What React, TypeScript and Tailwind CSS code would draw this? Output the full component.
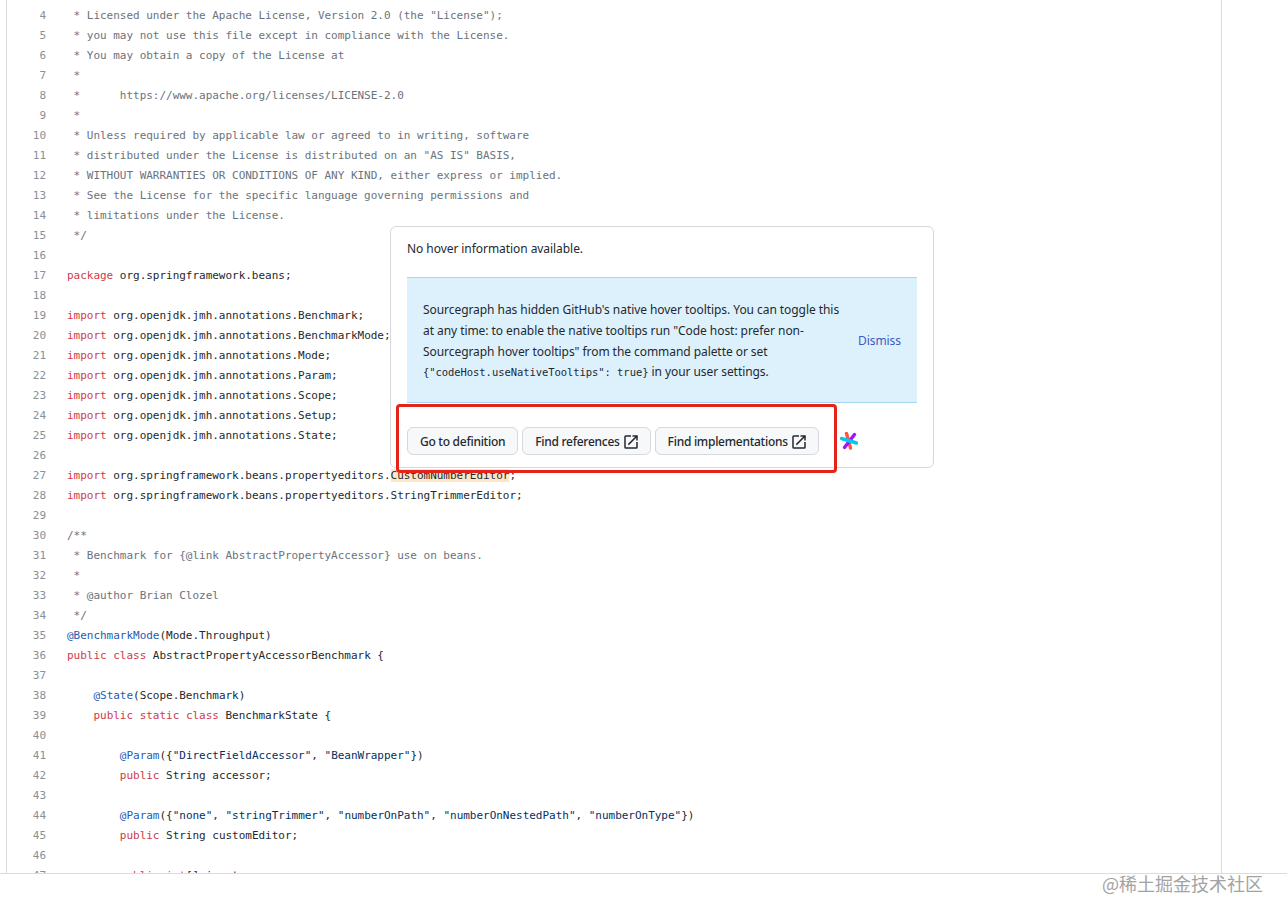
import React from "react";

type Tok = [string, string?];

const C = "text-[#6a737d]";
const K = "text-[#cf3a4b]";
const A = "text-[#1f5cb0]";
const S = "text-[#032f62]";

const lines: Tok[][] = [
  [[' * Licensed under the Apache License, Version 2.0 (the "License");', C]],
  [[" * you may not use this file except in compliance with the License.", C]],
  [[" * You may obtain a copy of the License at", C]],
  [[" *", C]],
  [[" *      https://www.apache.org/licenses/LICENSE-2.0", C]],
  [[" *", C]],
  [[" * Unless required by applicable law or agreed to in writing, software", C]],
  [[" * distributed under the License is distributed on an \"AS IS\" BASIS,", C]],
  [[" * WITHOUT WARRANTIES OR CONDITIONS OF ANY KIND, either express or implied.", C]],
  [[" * See the License for the specific language governing permissions and", C]],
  [[" * limitations under the License.", C]],
  [[" */", C]],
  [],
  [["package", K], [" org.springframework.beans;"]],
  [],
  [["import", K], [" org.openjdk.jmh.annotations.Benchmark;"]],
  [["import", K], [" org.openjdk.jmh.annotations.BenchmarkMode;"]],
  [["import", K], [" org.openjdk.jmh.annotations.Mode;"]],
  [["import", K], [" org.openjdk.jmh.annotations.Param;"]],
  [["import", K], [" org.openjdk.jmh.annotations.Scope;"]],
  [["import", K], [" org.openjdk.jmh.annotations.Setup;"]],
  [["import", K], [" org.openjdk.jmh.annotations.State;"]],
  [],
  [["import", K], [" org.springframework.beans.propertyeditors."], ["CustomNumberEditor", "bg-[#fde6c8]"], [";"]],
  [["import", K], [" org.springframework.beans.propertyeditors.StringTrimmerEditor;"]],
  [],
  [["/**", C]],
  [[" * Benchmark for {@link AbstractPropertyAccessor} use on beans.", C]],
  [[" *", C]],
  [[" * @author Brian Clozel", C]],
  [[" */", C]],
  [["@BenchmarkMode", A], ["(Mode.Throughput)"]],
  [["public", K], [" "], ["class", K], [" AbstractPropertyAccessorBenchmark {"]],
  [],
  [["    "], ["@State", A], ["(Scope.Benchmark)"]],
  [["    "], ["public", K], [" "], ["static", K], [" "], ["class", K], [" BenchmarkState {"]],
  [],
  [["        "], ["@Param", A], ["({"], ['"DirectFieldAccessor"', S], [", "], ['"BeanWrapper"', S], ["})"]],
  [["        "], ["public", K], [" String accessor;"]],
  [],
  [["        "], ["@Param", A], ["({"], ['"none"', S], [", "], ['"stringTrimmer"', S], [", "], ['"numberOnPath"', S], [", "], ['"numberOnNestedPath"', S], [", "], ['"numberOnType"', S], ["})"]],
  [["        "], ["public", K], [" String customEditor;"]],
  [],
  [["        "], ["public", K], [" "], ["int", K], ["[] input;"]],
];

function OpenIcon() {
  return (
    <svg viewBox="0 0 24 24" className="ml-[2px] h-[18px] w-[18px] fill-[#24292e]">
      <path d="M14 3v2h3.59l-9.83 9.83 1.41 1.41L19 6.41V10h2V3M19 19H5V5h7V3H5a2 2 0 0 0-2 2v14a2 2 0 0 0 2 2h14a2 2 0 0 0 2-2v-7h-2v7Z" />
    </svg>
  );
}

function HoverButton({ label, external }: { label: string; external?: boolean }) {
  return (
    <button
      className={
        external
          ? "flex h-7 items-center rounded-md border border-[#d5d9dd] bg-[#f6f8fa] pb-px pl-3 pr-[10px] pt-[2px] text-[12px] font-medium tracking-[-0.27px] text-[#24292e]"
          : "flex h-7 items-center rounded-md border border-[#d5d9dd] bg-[#f6f8fa] pb-px pl-3 pr-3 pt-[2px] text-[12px] font-medium tracking-[-0.27px] text-[#24292e]"
      }
    >
      {label}
      {external && <OpenIcon />}
    </button>
  );
}

function SourcegraphLogo() {
  return (
    <svg viewBox="0 0 18 18" className="ml-[17px] h-[18px] w-[18px]" fill="none" strokeWidth="3.4" strokeLinecap="round">
      <path d="M6.5 1.5 10.5 16" stroke="#ff5543" />
      <path d="M14.5 2.5 4.5 15.5" stroke="#a112ff" />
      <path d="M1.5 6.5 16.5 11" stroke="#00cbec" />
    </svg>
  );
}

export default function App() {
  return (
    <div className="relative h-[919px] w-full overflow-hidden bg-white font-['Liberation_Sans',sans-serif]">
      <div className="h-[874px] overflow-hidden border-b border-[#dcdcdc]">
        <div className="ml-[6px] h-full w-[1216px] border-x border-[#dcdcdc] pt-[6px] font-['DejaVu_Sans_Mono',monospace] text-[11px] leading-5 tracking-[-0.02px] text-[#24292e]">
          {lines.map((toks, i) => (
            <div key={i} className="flex h-5">
              <span className="w-[39px] shrink-0 text-right text-[#8a8f94]">{i + 4}</span>
              <span className="ml-[21px] whitespace-pre">
                {toks.map(([text, cls], j) => (
                  <span key={j} className={cls}>
                    {text}
                  </span>
                ))}
              </span>
            </div>
          ))}
        </div>
      </div>

      <div className="absolute left-[1102px] top-[871px] font-['Noto_Sans_CJK_SC',sans-serif] text-[18px] leading-[24px] text-[#a3a3a3]">
        @稀土掘金技术社区
      </div>

      <div className="absolute left-[390px] top-[226px] h-[242px] w-[544px] rounded-md border border-[#d5d9dd] bg-white px-4 font-['Noto_Sans',sans-serif] text-[12px] tracking-[-0.06px] text-[#24292e]">
        <div className="flex h-[50px] items-start pt-[11px] leading-[21px]">No hover information available.</div>
        <div className="flex h-[126px] items-center border-y border-[#a8d6f0] bg-[#ddf1fd] px-4 pt-[3px] leading-[20.7px]">
          <div className="flex-1">
            Sourcegraph has hidden GitHub's native hover tooltips. You can toggle this
            <br />
            at any time: to enable the native tooltips run "Code host: prefer non-
            <br />
            Sourcegraph hover tooltips" from the command palette or set
            <br />
            <code className="font-['DejaVu_Sans_Mono',monospace] text-[10.5px]">{'{"codeHost.useNativeTooltips": true}'}</code> in your user settings.
          </div>
          <span className="text-[#3b5bbf]">Dismiss</span>
        </div>
        <div className="mt-6 flex items-center gap-1">
          <HoverButton label="Go to definition" />
          <HoverButton label="Find references" external />
          <HoverButton label="Find implementations" external />
          <SourcegraphLogo />
        </div>
      </div>

      <div className="absolute left-[396px] top-[404px] h-[69px] w-[441px] rounded-sm border-[3px] border-[#e4231b]" />
    </div>
  );
}
